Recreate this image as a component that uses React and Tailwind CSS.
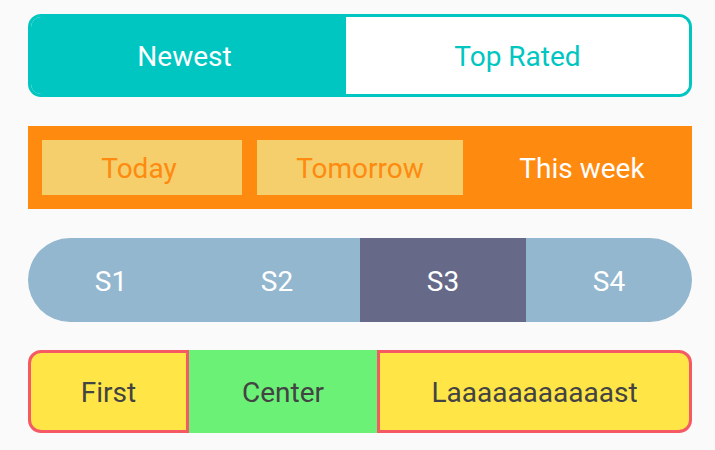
import React from "react";

const font = { fontFamily: "Roboto, 'Noto Sans', sans-serif" };

export default function App() {
  return (
    <div
      className="w-[715px] h-[450px] bg-[#fafafa] pl-[28px] pr-[23px] pt-[14px] flex flex-col text-[28px]"
      style={font}
    >
      {/* Newest / Top Rated */}
      <div className="flex h-[83px] border-[3px] border-[#00c6c2] rounded-[13px] overflow-hidden">
        <div className="w-[315px] bg-[#00c6c2] text-white flex items-center justify-center pt-[3px] pr-[8px]">
          Newest
        </div>
        <div className="flex-1 bg-white text-[#00c6c2] flex items-center justify-center pt-[3px]">
          Top Rated
        </div>
      </div>

      {/* Today / Tomorrow / This week */}
      <div className="mt-[29px] flex h-[83px] bg-[#ff8a10] p-[14px] gap-[15px]">
        <div className="w-[200px] bg-[#f4cf6b] text-[#ff8a10] flex items-center justify-center pt-[3px] pr-[6px]">
          Today
        </div>
        <div className="w-[206px] bg-[#f4cf6b] text-[#ff8a10] flex items-center justify-center pt-[3px]">
          Tomorrow
        </div>
        <div className="flex-1 text-white flex items-center justify-center pt-[3px] pl-[8px]">
          This week
        </div>
      </div>

      {/* S1..S4 */}
      <div className="mt-[29px] grid grid-cols-4 h-[84px] rounded-full overflow-hidden bg-[#93b7cf] text-white">
        <div className="flex items-center justify-center pt-[3px]">S1</div>
        <div className="flex items-center justify-center pt-[3px]">S2</div>
        <div className="flex items-center justify-center pt-[3px] bg-[#666a88]">S3</div>
        <div className="flex items-center justify-center pt-[3px]">S4</div>
      </div>

      {/* First / Center / Last */}
      <div className="mt-[28px] flex h-[83px] text-[#434343]">
        <div className="w-[161px] bg-[#ffe646] border-[3px] border-[#f55a64] rounded-l-[13px] flex items-center justify-center pt-[3px]">
          First
        </div>
        <div className="w-[188px] bg-[#6bf176] flex items-center justify-center pt-[3px]">
          Center
        </div>
        <div className="flex-1 bg-[#ffe646] border-[3px] border-[#f55a64] rounded-r-[13px] flex items-center justify-center pt-[3px]">
          Laaaaaaaaaaast
        </div>
      </div>
    </div>
  );
}
